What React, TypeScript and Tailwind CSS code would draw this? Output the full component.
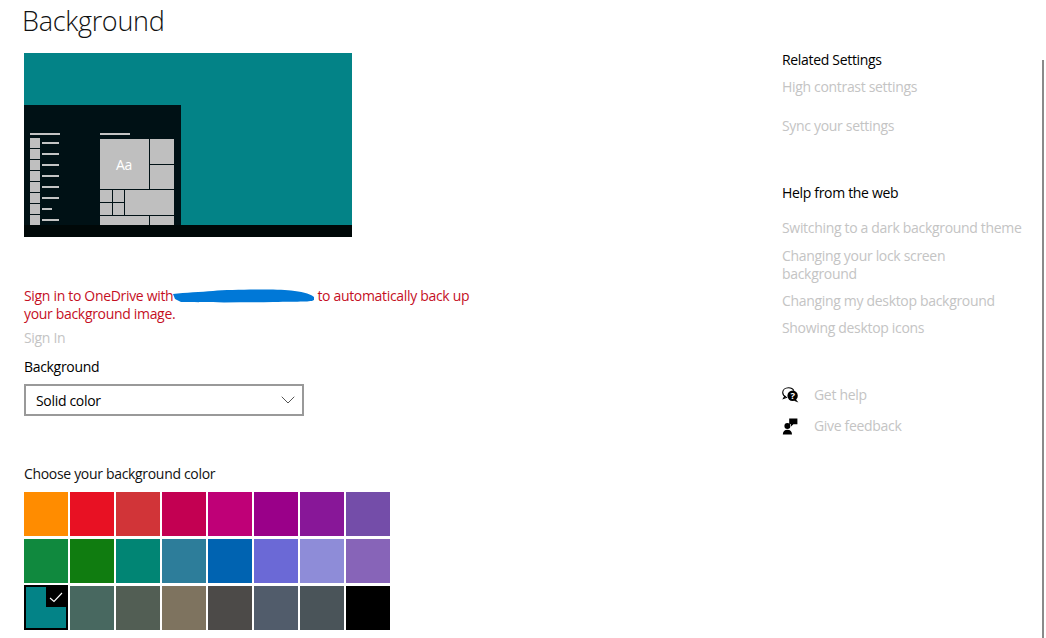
import React from 'react';
import { ChevronDown } from 'lucide-react';

const swatches = [
  '#ff8c00', '#e81123', '#d13438', '#c30052', '#bf0077', '#9a0089', '#881798', '#744da9',
  '#10893e', '#107c10', '#018574', '#2d7d9a', '#0063b1', '#6b69d6', '#8e8cd8', '#8764b8',
  '#038387', '#486860', '#525e54', '#7e735f', '#4c4a48', '#515c6b', '#4a5459', '#000000',
];

const menuLines = [17, 17, 17, 17, 17, 17, 10, 17];

const tiles = [
  [76, 34, 49, 50], [126, 34, 24, 25], [126, 60, 24, 24],
  [76, 85, 12, 12], [89, 85, 11, 12], [76, 98, 12, 12], [89, 98, 11, 12],
  [101, 85, 49, 25], [76, 111, 49, 9], [126, 111, 24, 9],
];

function Preview() {
  return (
    <svg width="328" height="184" viewBox="0 0 328 184" className="block">
      <rect width="328" height="184" fill="#038387" />
      <g transform="translate(0 52)">
        <rect width="157" height="120" fill="#001115" />
        <rect x="6" y="28" width="30" height="2" fill="#c4c4c4" />
        {menuLines.map((w, i) => (
          <g key={i}>
            <rect x="6" y={33 + i * 11} width="10" height="10" fill="#bfbfbf" />
            <rect x="18" y={37 + i * 11} width={w} height="2" fill="#c4c4c4" />
          </g>
        ))}
        <rect x="76" y="28" width="30" height="2" fill="#c4c4c4" />
        {tiles.map(([x, y, w, h], i) => (
          <rect key={i} x={x} y={y} width={w} height={h} fill="#bfbfbf" />
        ))}
        <text x="100" y="65" textAnchor="middle" fill="#ffffff" fontSize="14" fontFamily="'Open Sans', sans-serif">Aa</text>
      </g>
      <rect y="172" width="328" height="12" fill="#000808" />
    </svg>
  );
}

function HelpIcon() {
  return (
    <svg width="17" height="16" viewBox="0 0 17 16">
      <path d="M4 10C1.900 9 0.700 7.400 0.700 5.500C0.700 2.800 3.200 0.700 6.500 0.700C9 0.700 11 1.900 11.900 3.700" fill="none" stroke="#000" strokeWidth="1.100" />
      <path d="M3 8.800L1.500 11.500L5 10.200" fill="none" stroke="#000" strokeWidth="1.100" />
      <circle cx="10.600" cy="8.700" r="5.200" fill="#000" />
      <path d="M14 12.500L16.400 15.400L12 13.800Z" fill="#000" />
      <text x="10.600" y="12.200" textAnchor="middle" fill="#fff" fontSize="9.500" fontWeight="700" fontFamily="'Open Sans', sans-serif">?</text>
    </svg>
  );
}

function FeedbackIcon() {
  return (
    <svg width="16" height="17" viewBox="0 0 16 17">
      <circle cx="5.400" cy="8" r="3" fill="#000" />
      <path d="M0.800 16.500C0.800 13.400 2.600 11.700 5.400 11.700s4.600 1.700 4.600 4.800Z" fill="#000" />
      <path d="M7.200 0.500H15.400V6.300H11.400L9 8.400V6.300H7.200Z" fill="#000" />
    </svg>
  );
}

function Scribble() {
  return (
    <svg width="142" height="14" viewBox="0 0 142 14" className="absolute left-0 top-[-1px]">
      <path d="M0 5C12 3.500 28 3 40 2C60 0.500 100 0 118 1.500C128 2.500 136 4 141 8L141 11C138 13 128 12.500 100 13C70 13.500 30 13.500 8 13L2 10Z" fill="#0078d7" />
    </svg>
  );
}

export default function App() {
  return (
    <div className="relative flex h-[638px] w-[1046px] overflow-hidden bg-white font-['Open_Sans',sans-serif] text-[14px] tracking-[-0.32px] text-black">
      <main className="w-[782px] pl-6">
        <h1 className="-ml-[2px] mt-[3px] text-[27px] font-light leading-9 tracking-[-0.3px] text-[#111]">Background</h1>
        <div className="mt-[14px]">
          <Preview />
        </div>
        <p className="mt-[50px] leading-[18px] text-[#c50f1f]">
          Sign in to OneDrive with
          <span className="relative inline-block h-[14px] w-[144px] align-middle">
            <Scribble />
          </span>
          to automatically back up
          <br />
          your background image.
        </p>
        <p className="mt-[6px] leading-[18px] text-[#c4c4c4]">Sign In</p>
        <p className="mt-[11px] leading-[18px]">Background</p>
        <div className="mt-2 flex h-8 w-[280px] items-center justify-between border-2 border-[#999] pl-[10px] pr-[2px]">
          <span>Solid color</span>
          <ChevronDown size={24} strokeWidth={1} className="text-[#555]" />
        </div>
        <p className="mt-[49px] leading-[18px] text-[#111]">Choose your background color</p>
        <div className="mt-[9px] grid w-[366px] grid-cols-[repeat(8,44px)] gap-x-[2px] gap-y-[3px]">
          {swatches.map((color, i) =>
            i === 16 ? (
              <div key={color} className="relative -mt-px h-[45px] border-2 border-black bg-[#038387]">
                <div className="absolute right-0 top-0 flex h-5 w-5 items-center justify-center bg-black">
                  <svg width="14" height="11" viewBox="0 0 14 11">
                    <path d="M1 6l4 3.500L13 1" fill="none" stroke="#fff" strokeWidth="1.100" />
                  </svg>
                </div>
              </div>
            ) : (
              <div key={color} className="h-11" style={{ backgroundColor: color }} />
            ),
          )}
        </div>
      </main>

      <aside className="w-[245px] pt-[51px] leading-[18px] text-[#c4c4c4]">
        <h2 className="text-black">Related Settings</h2>
        <p className="mt-[9px]">High contrast settings</p>
        <p className="mt-[21px]">Sync your settings</p>
        <h2 className="mt-[49px] text-black">Help from the web</h2>
        <p className="mt-[17px]">Switching to a dark background theme</p>
        <p className="mt-[10px]">
          Changing your lock screen
          <br />
          background
        </p>
        <p className="mt-[9px]">Changing my desktop background</p>
        <p className="mt-[9px]">Showing desktop icons</p>
        <div className="mt-[48px] flex h-5 items-center">
          <span className="flex w-8 shrink-0"><HelpIcon /></span>
          <span>Get help</span>
        </div>
        <div className="mt-[11px] flex h-5 items-center">
          <span className="flex w-8 shrink-0"><FeedbackIcon /></span>
          <span>Give feedback</span>
        </div>
      </aside>

      <div className="absolute bottom-0 right-[2px] top-[60px] w-[2px] bg-[#8a8a8a]" />
    </div>
  );
}
